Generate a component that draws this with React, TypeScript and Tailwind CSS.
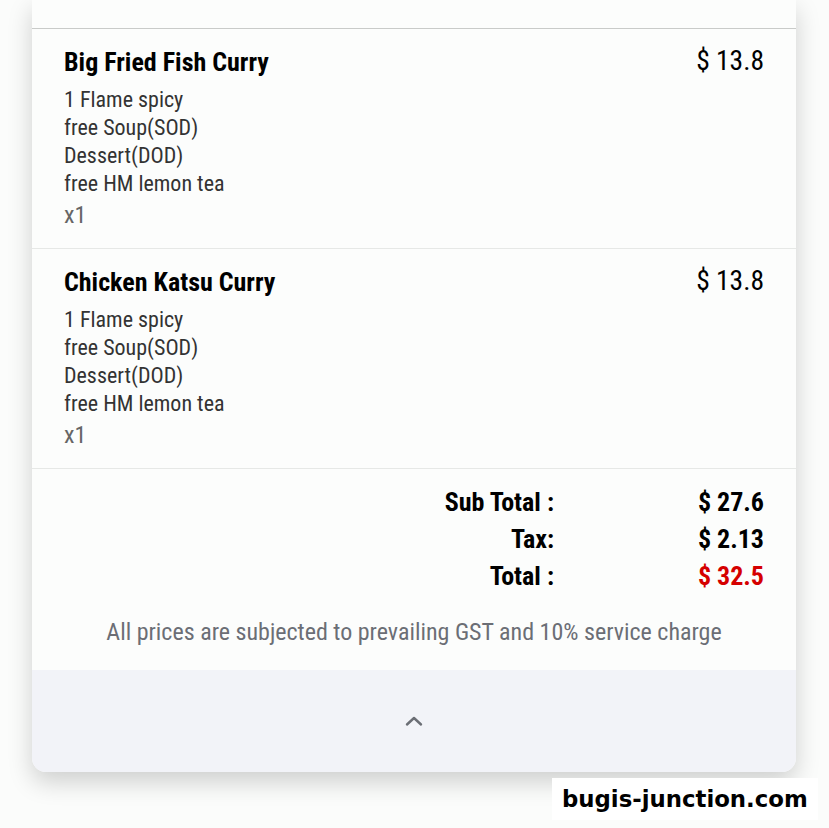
import React from 'react';

interface OrderItem {
  name: string;
  price: string;
  options: string[];
  qty: number;
}

const items: OrderItem[] = [
  {
    name: 'Big Fried Fish Curry',
    price: '$ 13.8',
    options: ['1 Flame spicy', 'free Soup(SOD)', 'Dessert(DOD)', 'free HM lemon tea'],
    qty: 1
  },
  {
    name: 'Chicken Katsu Curry',
    price: '$ 13.8',
    options: ['1 Flame spicy', 'free Soup(SOD)', 'Dessert(DOD)', 'free HM lemon tea'],
    qty: 1
  }
];

export default function App() {
  return (
    <div
      className="relative min-h-[828px] w-full bg-[#fbfcfb] font-stretch-condensed"
      style={{ fontFamily: '"Roboto Condensed", Roboto, sans-serif' }}
    >
      <div className="ml-[32px] mr-[33px] flex flex-col overflow-hidden rounded-b-[14px] bg-[#fcfdfc] shadow-[0_10px_24px_rgba(0,0,0,0.18)]">
        <div className="h-[29px] border-b border-[#c9cbc9]" />

        {/* Items */}
        {items.map((item) => (
          <div key={item.name} className="border-b border-[#e6e8e6] pl-[32px] pr-[32px] pt-[17px] pb-[18px]">
            <div className="flex items-start justify-between">
              <h3 className="text-[26px] leading-[32px] font-bold text-black">{item.name}</h3>
              <span className="text-[27.5px] leading-[30px] text-black">{item.price}</span>
            </div>
            <ul className="mt-[8px] text-[22px] leading-[28px] text-[#333]">
              {item.options.map((opt) => (
                <li key={opt}>{opt}</li>
              ))}
            </ul>
            <div className="mt-[2px] text-[24px] leading-[30px] text-[#666]">x{item.qty}</div>
          </div>
        ))}

        {/* Totals */}
        <div className="flex flex-col items-end px-[32px] pt-[16px]">
          <div className="grid grid-cols-[auto_210px] gap-y-[3px] text-[26px] leading-[34px] font-bold">
            <span className="text-right">Sub Total :</span>
            <span className="text-right">$ 27.6</span>
            <span className="text-right">Tax:</span>
            <span className="text-right">$ 2.13</span>
            <span className="text-right">Total :</span>
            <span className="text-right text-[#d50000]">$ 32.5</span>
          </div>
        </div>
        <p className="pt-[24px] pb-[23px] text-center text-[24px] leading-[30px] text-[#6b6e75]">
          All prices are subjected to prevailing GST and 10% service charge
        </p>

        {/* Collapse */}
        <div className="flex h-[102px] items-center justify-center bg-[#f2f3f8]">
          <svg width="20" height="12" viewBox="0 0 20 12" fill="none" stroke="#6b6e75" strokeWidth="2.4" strokeLinecap="round" strokeLinejoin="round">
            <path d="M3 9.5 L10 3 L17 9.5" />
          </svg>
        </div>
      </div>

      <div
        className="absolute top-[778px] left-[552px] bg-white px-[10px] py-[5px] text-[22.8px] leading-[32px] font-bold text-black"
        style={{ fontFamily: '"DejaVu Sans", sans-serif', fontStretch: 'normal' }}
      >
        bugis-junction.com
      </div>
    </div>
  );
}
